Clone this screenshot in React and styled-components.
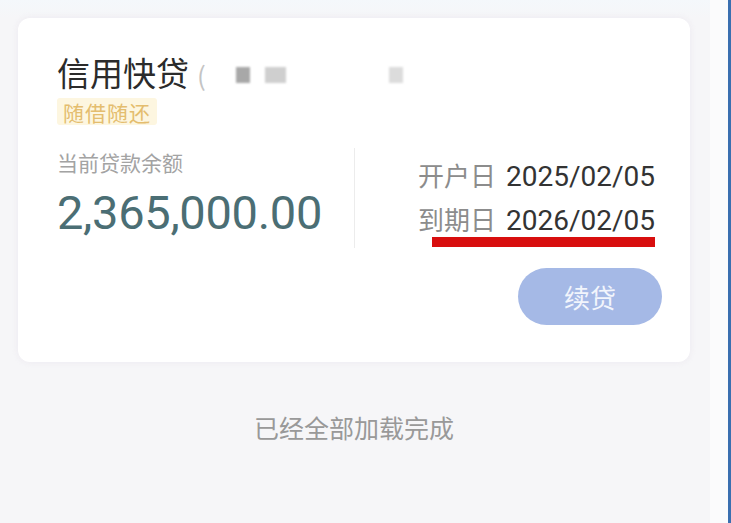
import React from 'react'
import styled, { createGlobalStyle } from 'styled-components'

const GlobalStyle = createGlobalStyle`
    html, body {
        margin: 0;
        padding: 0;
        background: #f6f6f8;
    }
    body {
        font-family: "Noto Sans CJK SC", "Noto Sans", sans-serif;
    }
`

const Screen = styled.div`
    display: flex;
    width: 731px;
    height: 523px;
    overflow: hidden;
    background: #f6f6f8;
`

const Main = styled.main`
    flex: 1;
    display: flex;
    flex-direction: column;
    padding: 18px 20px 0 18px;
    background: linear-gradient(180deg, #f4f8fb 0px, #f6f6f8 18px);
`

const EdgeStrip = styled.div`
    width: 18px;
    background: #fbfbfc;
    border-right: 3px solid #3a6fb0;
`

const Card = styled.section`
    background: #ffffff;
    border-radius: 12px;
    padding: 34px 28px 37px 39px;
    box-shadow: 0 0 6px rgba(230, 225, 235, 0.6);
`

const TitleRow = styled.header`
    display: flex;
    align-items: center;
    height: 40px;
`

const Title = styled.h1`
    margin: 0;
    font-size: 33px;
    font-weight: 400;
    color: #2b2b2b;
    line-height: 40px;
`

const Paren = styled.span`
    font-size: 26px;
    color: #c4c4c4;
    margin: 4px 30px 0 8px;
`

const Mask = styled.span`
    display: inline-block;
    width: ${props => props.w}px;
    height: 16px;
    margin: 6px ${props => props.gap}px 0 0;
    background: ${props => props.c};
    filter: blur(0.8px);
`

const Tag = styled.div`
    display: inline-flex;
    align-self: flex-start;
    margin-top: 6px;
    padding: 0 6px;
    height: 27px;
    align-items: center;
    font-size: 21px;
    letter-spacing: 1px;
    color: #e4bd6e;
    background: #fdf6e0;
    border-radius: 3px;
`

const InfoRow = styled.div`
    display: flex;
    align-items: flex-start;
    margin-top: 22px;
`

const AmountBlock = styled.div`
    width: 297px;
    display: flex;
    flex-direction: column;
`

const Label = styled.div`
    font-size: 21px;
    line-height: 28px;
    color: #a3a3a3;
`

const Amount = styled.div`
    font-family: Roboto, "Noto Sans", sans-serif;
    font-size: 47px;
    line-height: 56px;
    margin-top: 9px;
    color: #4b6e74;
    letter-spacing: -0.3px;
`

const Divider = styled.div`
    width: 1px;
    height: 100px;
    background: #ececec;
`

const Dates = styled.div`
    flex: 1;
    display: flex;
    flex-direction: column;
    align-items: flex-end;
    padding-top: 6px;
    padding-right: 7px;
`

const DateLine = styled.div`
    position: relative;
    display: flex;
    align-items: baseline;
    line-height: 42px;
`

const DateLabel = styled.span`
    font-size: 26px;
    color: #8c8c8c;
    margin-right: 10px;
`

const DateValue = styled.span`
    font-family: Roboto, "Noto Sans", sans-serif;
    font-size: 28px;
    color: #333;
`

const RedMark = styled.span`
    position: absolute;
    left: 14px;
    right: 0;
    bottom: -5px;
    height: 10px;
    background: #d80e0e;
`

const Actions = styled.div`
    display: flex;
    justify-content: flex-end;
    margin-top: 20px;
`

const RenewButton = styled.button`
    width: 144px;
    height: 57px;
    border: none;
    border-radius: 29px;
    background: #a5b9e6;
    color: #f2f5fc;
    font-family: "Noto Sans CJK SC", sans-serif;
    font-size: 26px;
`

const Footer = styled.p`
    margin: 47px 0 0;
    text-align: center;
    font-size: 25px;
    color: #999;
`

const DATES = [
    { label: '开户日', value: '2025/02/05' },
    { label: '到期日', value: '2026/02/05', marked: true },
]

export default function App() {
    return (
        <Screen>
            <GlobalStyle />
            <Main>
                <Card>
                    <TitleRow>
                        <Title>信用快贷</Title>
                        <Paren>(</Paren>
                        <Mask w={14} gap={15} c="#a8a8a8" />
                        <Mask w={21} gap={103} c="#cfcfcf" />
                        <Mask w={14} gap={0} c="#dcdcdc" />
                    </TitleRow>
                    <Tag>随借随还</Tag>
                    <InfoRow>
                        <AmountBlock>
                            <Label>当前贷款余额</Label>
                            <Amount>2,365,000.00</Amount>
                        </AmountBlock>
                        <Divider />
                        <Dates>
                            {DATES.map(d => (
                                <DateLine key={d.label}>
                                    <DateLabel>{d.label}</DateLabel>
                                    <DateValue>{d.value}</DateValue>
                                    {d.marked && <RedMark />}
                                </DateLine>
                            ))}
                        </Dates>
                    </InfoRow>
                    <Actions>
                        <RenewButton>续贷</RenewButton>
                    </Actions>
                </Card>
                <Footer>已经全部加载完成</Footer>
            </Main>
            <EdgeStrip />
        </Screen>
    )
}
